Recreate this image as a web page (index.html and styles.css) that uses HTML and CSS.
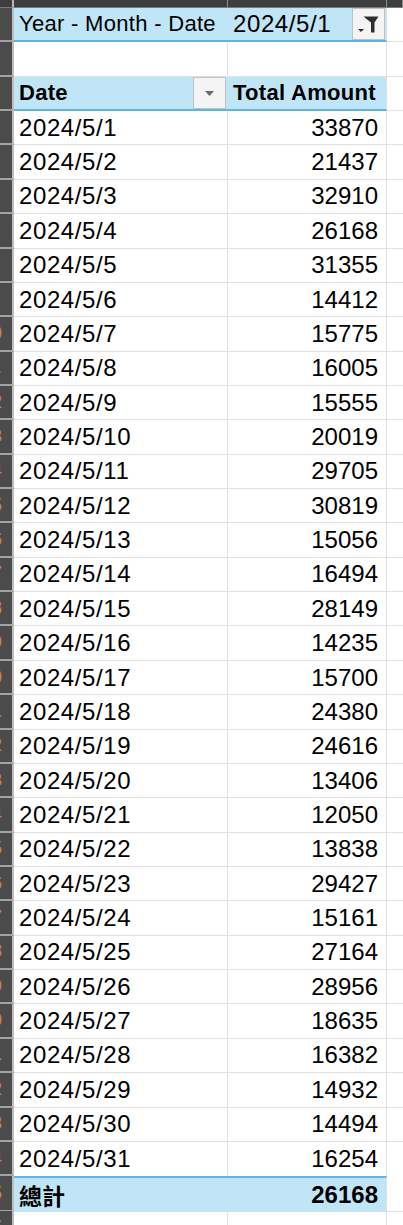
FILE: index.html
```html
<!DOCTYPE html>
<html>
<head>
<meta charset="utf-8">
<link rel="stylesheet" href="styles.css">
</head>
<body>
<div class="sheet">
  <div class="row topbar">
    <div class="tb corner"></div><div class="tb"></div><div class="tb"></div><div class="tb"></div>
  </div>
  <div class="row">
    <div class="rh"><span class="rn">1</span></div>
    <div class="cell blue fa hdrfont">Year - Month - Date</div>
    <div class="cell blue fb date"><span>2024/5/1</span>
      <span class="btn fbtn"><svg width="31" height="30" viewBox="0 0 31 30"><path d="M10.5 7.5 H25.5 L21.5 13.5 V23.5 H18 V13.5 Z" fill="#2e2e2e"/><path d="M5 20 H11 L8 23 Z" fill="#2e2e2e"/></svg></span>
    </div>
    <div class="cell c"></div>
  </div>
  <div class="row">
    <div class="rh"><span class="rn">2</span></div>
    <div class="cell"></div><div class="cell"></div><div class="cell c"></div>
  </div>
  <div class="row">
    <div class="rh"><span class="rn">3</span></div>
    <div class="cell blue ha bold hdrfont"><span>Date</span>
      <span class="btn dbtn"><svg width="31" height="30" viewBox="0 0 31 30"><path d="M11 13 H20 L15.5 18 Z" fill="#6a6a6a"/></svg></span>
    </div>
    <div class="cell blue hb bold hdrfont">Total Amount</div>
    <div class="cell c"></div>
  </div>
  <div class="row"><div class="rh"><span class="rn">4</span></div><div class="cell date">2024/5/1</div><div class="cell num">33870</div><div class="cell c"></div></div>
  <div class="row"><div class="rh"><span class="rn">5</span></div><div class="cell date">2024/5/2</div><div class="cell num">21437</div><div class="cell c"></div></div>
  <div class="row"><div class="rh"><span class="rn">6</span></div><div class="cell date">2024/5/3</div><div class="cell num">32910</div><div class="cell c"></div></div>
  <div class="row"><div class="rh"><span class="rn">7</span></div><div class="cell date">2024/5/4</div><div class="cell num">26168</div><div class="cell c"></div></div>
  <div class="row"><div class="rh"><span class="rn">8</span></div><div class="cell date">2024/5/5</div><div class="cell num">31355</div><div class="cell c"></div></div>
  <div class="row"><div class="rh"><span class="rn">9</span></div><div class="cell date">2024/5/6</div><div class="cell num">14412</div><div class="cell c"></div></div>
  <div class="row"><div class="rh"><span class="rn">10</span></div><div class="cell date">2024/5/7</div><div class="cell num">15775</div><div class="cell c"></div></div>
  <div class="row"><div class="rh"><span class="rn">11</span></div><div class="cell date">2024/5/8</div><div class="cell num">16005</div><div class="cell c"></div></div>
  <div class="row"><div class="rh"><span class="rn">12</span></div><div class="cell date">2024/5/9</div><div class="cell num">15555</div><div class="cell c"></div></div>
  <div class="row"><div class="rh"><span class="rn">13</span></div><div class="cell date">2024/5/10</div><div class="cell num">20019</div><div class="cell c"></div></div>
  <div class="row"><div class="rh"><span class="rn">14</span></div><div class="cell date">2024/5/11</div><div class="cell num">29705</div><div class="cell c"></div></div>
  <div class="row"><div class="rh"><span class="rn">15</span></div><div class="cell date">2024/5/12</div><div class="cell num">30819</div><div class="cell c"></div></div>
  <div class="row"><div class="rh"><span class="rn">16</span></div><div class="cell date">2024/5/13</div><div class="cell num">15056</div><div class="cell c"></div></div>
  <div class="row"><div class="rh"><span class="rn">17</span></div><div class="cell date">2024/5/14</div><div class="cell num">16494</div><div class="cell c"></div></div>
  <div class="row"><div class="rh"><span class="rn">18</span></div><div class="cell date">2024/5/15</div><div class="cell num">28149</div><div class="cell c"></div></div>
  <div class="row"><div class="rh"><span class="rn">19</span></div><div class="cell date">2024/5/16</div><div class="cell num">14235</div><div class="cell c"></div></div>
  <div class="row"><div class="rh"><span class="rn">20</span></div><div class="cell date">2024/5/17</div><div class="cell num">15700</div><div class="cell c"></div></div>
  <div class="row"><div class="rh"><span class="rn">21</span></div><div class="cell date">2024/5/18</div><div class="cell num">24380</div><div class="cell c"></div></div>
  <div class="row"><div class="rh"><span class="rn">22</span></div><div class="cell date">2024/5/19</div><div class="cell num">24616</div><div class="cell c"></div></div>
  <div class="row"><div class="rh"><span class="rn">23</span></div><div class="cell date">2024/5/20</div><div class="cell num">13406</div><div class="cell c"></div></div>
  <div class="row"><div class="rh"><span class="rn">24</span></div><div class="cell date">2024/5/21</div><div class="cell num">12050</div><div class="cell c"></div></div>
  <div class="row"><div class="rh"><span class="rn">25</span></div><div class="cell date">2024/5/22</div><div class="cell num">13838</div><div class="cell c"></div></div>
  <div class="row"><div class="rh"><span class="rn">26</span></div><div class="cell date">2024/5/23</div><div class="cell num">29427</div><div class="cell c"></div></div>
  <div class="row"><div class="rh"><span class="rn">27</span></div><div class="cell date">2024/5/24</div><div class="cell num">15161</div><div class="cell c"></div></div>
  <div class="row"><div class="rh"><span class="rn">28</span></div><div class="cell date">2024/5/25</div><div class="cell num">27164</div><div class="cell c"></div></div>
  <div class="row"><div class="rh"><span class="rn">29</span></div><div class="cell date">2024/5/26</div><div class="cell num">28956</div><div class="cell c"></div></div>
  <div class="row"><div class="rh"><span class="rn">30</span></div><div class="cell date">2024/5/27</div><div class="cell num">18635</div><div class="cell c"></div></div>
  <div class="row"><div class="rh"><span class="rn">31</span></div><div class="cell date">2024/5/28</div><div class="cell num">16382</div><div class="cell c"></div></div>
  <div class="row"><div class="rh"><span class="rn">32</span></div><div class="cell date">2024/5/29</div><div class="cell num">14932</div><div class="cell c"></div></div>
  <div class="row"><div class="rh"><span class="rn">33</span></div><div class="cell date">2024/5/30</div><div class="cell num">14494</div><div class="cell c"></div></div>
  <div class="row last"><div class="rh"><span class="rn">34</span></div><div class="cell date">2024/5/31</div><div class="cell num">16254</div><div class="cell c"></div></div>
  <div class="row total"><div class="rh"><span class="rn">35</span></div><div class="cell blue ta cjk">總計</div><div class="cell blue tb2 num bold">26168</div><div class="cell c"></div></div>
  <div class="row"><div class="rh"><span class="rn">36</span></div><div class="cell"></div><div class="cell"></div><div class="cell c"></div></div>
</div>
</body>
</html>
```
FILE: styles.css
```css
html, body {
  margin: 0;
  padding: 0;
  background: #ffffff;
}
body {
  font-family: "Liberation Sans", Arial, sans-serif;
  color: #000;
  overflow: hidden;
}
.sheet {
  width: 403px;
}
.row {
  display: grid;
  grid-template-columns: 14px 214px 159px 16px;
  height: 34.36px;
}
.topbar {
  height: 8px;
}
.tb {
  box-sizing: border-box;
  background: #3e3e3e;
  border-right: 1px solid #8f8f8f;
  border-bottom: 1px solid #7a7a7a;
}
.tb.corner {
  border-right: 2px solid #b8b8b8;
}
.rh {
  box-sizing: border-box;
  background: #4b4b4b;
  border-right: 2px solid #bdbdbd;
  border-bottom: 2px solid #a3a3a3;
  overflow: hidden;
  display: flex;
  justify-content: flex-end;
  align-items: center;
}
.rn {
  flex: 0 0 40px;
  width: 40px;
  text-align: center;
  font-size: 18px;
  color: #c9814a;
}
.cell {
  box-sizing: border-box;
  border-right: 1px solid #e1e1e1;
  border-bottom: 1px solid #e1e1e1;
  display: flex;
  align-items: center;
  padding: 0 8px 0 5px;
  font-size: 24px;
  white-space: nowrap;
  min-width: 0;
}
.cell.c {
  border-right: none;
}
.date {
  letter-spacing: 0.6px;
}
.num {
  justify-content: flex-end;
}
.bold {
  font-weight: 700;
}
.hdrfont {
  font-size: 22px;
  letter-spacing: 0.3px;
}
.blue {
  background: #c0e5f6;
}
.fa {
  border-right: none;
  border-bottom: 2px solid #5db5e4;
}
.fb {
  border-bottom: 2px solid #5db5e4;
  padding-right: 1px;
}
.ha {
  border-right: none;
  border-bottom: 2px solid #5db5e4;
  padding-right: 2px;
}
.hb {
  border-bottom: 2px solid #5db5e4;
}
.btn {
  box-sizing: border-box;
  margin-left: auto;
  width: 33px;
  align-self: stretch;
  background: #f4f4f4;
  border: 1px solid #c2c2c2;
  display: flex;
  align-items: center;
  justify-content: center;
}
.btn svg {
  display: block;
}
.last .cell {
  border-bottom: none;
}
.total .cell.blue {
  border-top: 2px solid #5db5e4;
  border-bottom: none;
}
.ta {
  border-right: none;
}
.cjk {
  font-family: "Noto Sans CJK TC", "Noto Sans CJK SC", sans-serif;
  font-weight: 700;
  font-size: 23px;
}
```
